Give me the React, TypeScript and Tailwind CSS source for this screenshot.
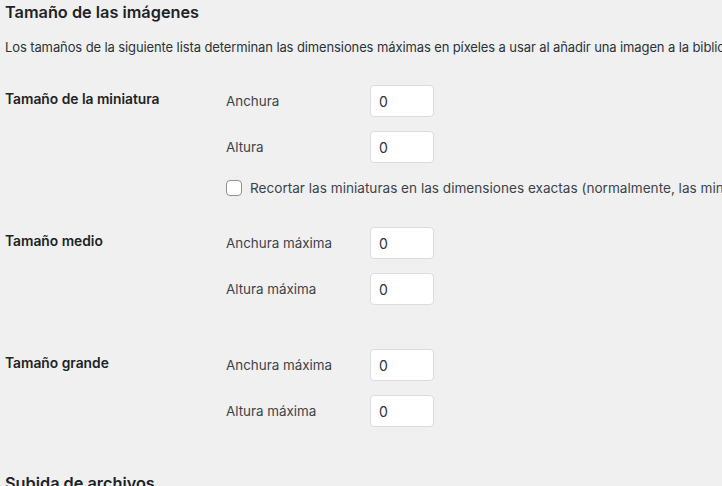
import React from "react";

const font = { fontFamily: "Inter, 'Noto Sans', sans-serif" };

function Field({ label }: { label: string }) {
  return (
    <div className="flex items-center h-[32px]">
      <span className="w-[144px] shrink-0 text-[13.4px] leading-[20px] text-[#3c434a]">{label}</span>
      <div className="w-[64px] h-[32px] shrink-0 bg-white border border-[#dcdcde] rounded-[4px] flex items-center pl-[8px] text-[14px] text-[#2c3338]">
        0
      </div>
    </div>
  );
}

export default function App() {
  return (
    <div className="w-[722px] h-[486px] overflow-hidden bg-[#f0f0f1] text-[#1d2327] pl-[5px]" style={font}>
      <h2 className="text-[16.3px] leading-[24px] font-semibold whitespace-nowrap">Tamaño de las imágenes</h2>
      <p className="mt-[13px] text-[13px] tracking-[-0.11px] leading-[20px] whitespace-nowrap text-[#2c3338]">
        Los tamaños de la siguiente lista determinan las dimensiones máximas en píxeles a usar al añadir una imagen a la biblioteca de medios.
      </p>

      <div className="flex mt-[28px]">
        <div className="w-[221px] shrink-0 pt-[4px] text-[13.8px] leading-[20px] font-semibold">Tamaño de la miniatura</div>
        <div className="flex flex-col gap-[14px]">
          <Field label="Anchura" />
          <Field label="Altura" />
          <div className="flex items-center h-[20px] mt-[1px] whitespace-nowrap">
            <span className="w-[16px] h-[16px] shrink-0 bg-white border border-[#8c8f94] rounded-[4px]" />
            <span className="ml-[8px] text-[13.6px] leading-[20px] text-[#3c434a]">
              Recortar las miniaturas en las dimensiones exactas (normalmente, las miniaturas son proporcionales)
            </span>
          </div>
        </div>
      </div>

      <div className="flex mt-[29px]">
        <div className="w-[221px] shrink-0 pt-[4px] text-[13.8px] leading-[20px] font-semibold">Tamaño medio</div>
        <div className="flex flex-col gap-[14px]">
          <Field label="Anchura máxima" />
          <Field label="Altura máxima" />
        </div>
      </div>

      <div className="flex mt-[44px]">
        <div className="w-[221px] shrink-0 pt-[4px] text-[13.8px] leading-[20px] font-semibold">Tamaño grande</div>
        <div className="flex flex-col gap-[14px]">
          <Field label="Anchura máxima" />
          <Field label="Altura máxima" />
        </div>
      </div>

      <h2 className="mt-[44px] text-[16.3px] leading-[24px] font-semibold whitespace-nowrap">Subida de archivos</h2>
    </div>
  );
}
